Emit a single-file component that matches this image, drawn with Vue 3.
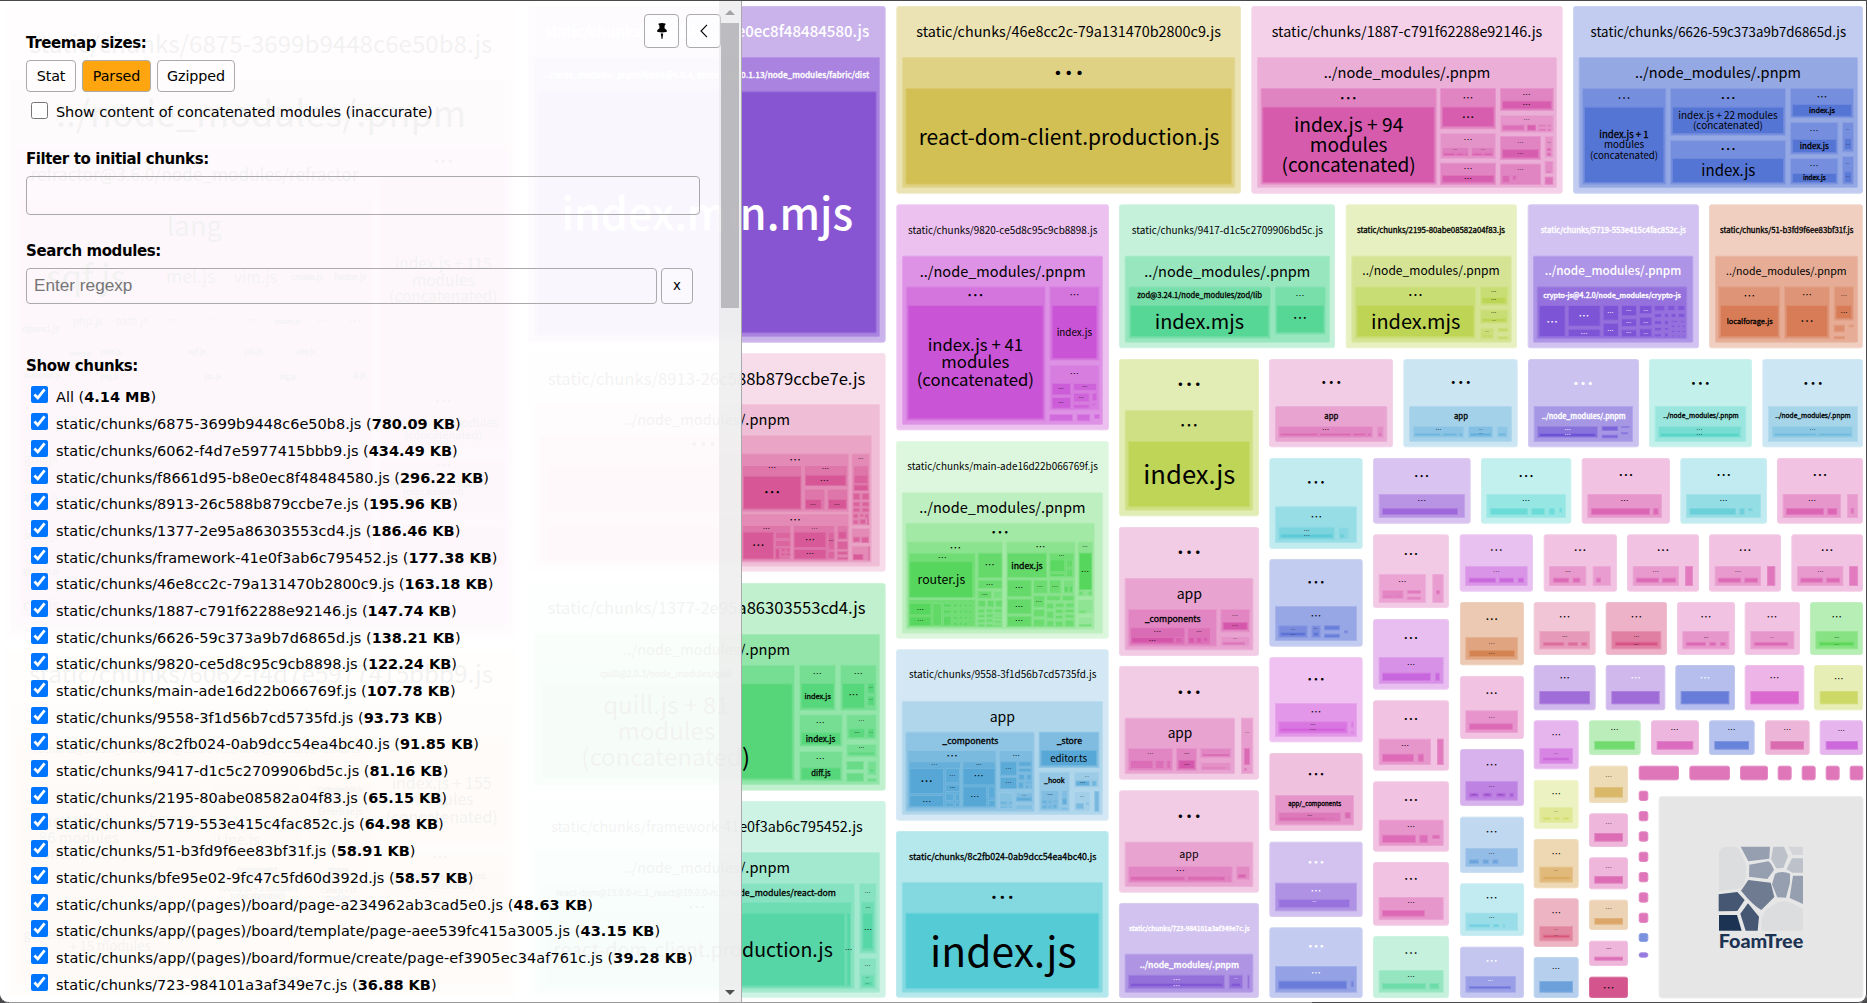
<script setup>
import { ref } from 'vue'

const families = '"Noto Sans CJK JP", "Noto Sans CJK SC", "Noto Sans", sans-serif'
const ctx = document.createElement('canvas').getContext('2d')
ctx.font = `100px ${families}`

function mix(hex, alpha) {
  const n = parseInt(hex.slice(1), 16)
  const ch = [n >> 16, (n >> 8) & 255, n & 255]
  return `rgb(${ch.map((v) => Math.round(255 - (255 - v) * alpha)).join(',')})`
}

// Each chunk: base colour, origin, label colour, then its groups.
//   "<strength%> x1 y1 x2 y2"  rectangle
//   ". cx cy width"            ellipsis label
//   "T cx baseline width text" text label
// Group coordinates are thirds of a pixel, relative to the origin.
const K = '#000', W = '#fff'
const chunks = [
  ['#d452a8', 0, 0, K, `28 15 18 1551 1914;49 33 240 1535 1895;72 48 440 1522 1875;88 60 600 1115 1850;88 1140 530 1515 1345;88 1140 1380 1515 1560;88 1140 1580 1515 1700;
   T 783 158 1388 static/chunks/6875-3699b9448c6e50b8.js;T 783 382 1230 ../node_modules/.pnpm;T 583 542 985 refractor@3.6.0/node_modules/refractor;T 583 707 165 lang;T 258 868 240 sqf.js;T 572 850 148 mel.js;T 766 850 128 vim.js;T 921 840 95 cmake.js;T 1050 840 95 factor.js;T 122 996 110 opencl.js;T 263 975 90 php.js;T 395 975 95 bash.js;T 863 972 76 cobol.js;T 1330 808 290 index.js + 115;T 1330 857 188 modules;T 1330 906 324 (concatenated);. 1330 482 46;. 520 963 32;. 638 963 32;. 751 963 32;. 967 963 28;. 1065 963 28;
   T 240 1066 66 xquery.js;T 333 1062 62 purs.js;T 590 1062 52 sqf.js;T 760 1062 54 psl.js;T 918 1062 54 coq.js;T 127 1134 112 livescript.js;T 329 1136 55 pug.js;T 640 1136 50 jsx.js;T 865 1136 50 zig.js;T 1078 1134 40 d.js;T 123 1388 102 gml.js;T 123 1504 102 abap.js;T 123 1618 102 smali.js;T 123 1723 110 gherkin.js;T 123 1830 110 css.js;T 1330 1280 330 index.js + 3 modules;T 1330 1316 232 (concatenated);. 1330 1203 40;. 1330 1395 36;T 1300 1460 260 index.js + 31 modules;T 1300 1486 182 (concatenated)`],
  ['#e0975f', 0, 0, K, `28 15 1953 1551 2990;49 33 2110 1535 2975;72 48 2210 1125 2955;72 1140 2210 1522 2530;72 1140 2560 1522 2955;88 60 2350 600 2940;88 625 2350 910 2560;88 920 2350 1110 2560;88 1145 2610 1515 2690;
   T 783 2050 1392 static/chunks/6062-f4d7e5977415bbb9.js;T 790 2170 570 ../node_modules/.pnpm;T 590 2260 980 recharts@2.15.0_react-dom@19.0.0-rc.1/node_modules/recharts;T 237 2482 300 reactUtils.js +;T 237 2530 240 86 modules;T 237 2576 290 (concatenated);T 520 2472 145 types.js;T 714 2535 128 Line.js;T 1020 2446 134 ErrorBar.js;T 1020 2376 134 CartesianGrid.js;T 1325 2366 300 index.js + 155;T 1325 2416 190 modules;T 1325 2468 336 (concatenated);T 770 2618 122 component;T 1015 2616 60 shape;T 773 2674 240 Tooltip.js + 3 modules;T 773 2698 166 (concatenated);T 1015 2680 106 Curve.js + 13;T 1015 2700 76 modules;T 1340 2636 230 index.js + 7 modules;T 1325 2668 200 (concatenated);T 320 2816 500 generateCategoricalChart.js;T 330 2852 245 + 15 modules;T 850 2792 100 Label.js;T 850 2946 100 LabelList.js;. 1320 2570 36`],
  ['#8753d2', 400, 0, W, `44 384 18 1457 1028;72 401 171 1440 1011;99 411 274 1430 1000;T 921 111 973 static/chunks/f8661d95-b8e0ec8f48484580.js;T 921 234 973 ../node_modules/.pnpm/fabric@6.5.4_encoding@0.1.13/node_modules/fabric/dist;T 922 690 875 index.min.mjs`],
  ['#d65494', 700, 340, K, `20 -515 39 557 695;38 -498 192 540 680;53 -485 285 516 668;68 -475 340 448 518;68 -475 520 448 665;68 454 340 510 557;68 454 564 510 610;68 454 617 510 664;80 -460 375 120 515;80 126 375 306 512;98 129 407 304 508;80 312 375 443 440;98 315 404 439 438;80 312 446 376 511;98 315 477 365 508;80 381 446 444 511;98 384 477 440 508;80 -460 555 120 662;80 126 555 273 660;97 128 575 222 658;90 225 575 272 597;90 225 600 272 621;97 225 625 240 658;97 243 624 256 635;97 259 624 271 635;97 243 638 256 648;97 259 638 271 648;80 279 555 405 661;97 281 575 379 624;97 281 627 379 658;90 383 575 404 630;90 383 633 404 657;80 410 555 445 600;97 414 574 440 598;92 411 603 444 629;92 411 633 444 646;92 411 650 444 660;80 459 376 507 454;92 461 404 505 432;97 461 434 505 453;92 459 459 481 480;92 485 459 508 480;92 459 485 481 500;92 485 485 508 500;92 459 503 481 517;92 485 503 508 517;92 459 521 475 535;92 479 521 491 532;92 494 521 506 535;92 459 539 475 553;92 479 537 498 553;97 501 535 507 555;92 459 590 480 607;92 484 590 507 609;97 459 642 490 660;92 505 619 510 662;
   T 20 135 952 static/chunks/8913-26c588b879ccbe7e.js;T 20 256 500 ../node_modules/.pnpm;. 10 312 60;. 285 358 26;. 216 385 18;. 216 458 38;. 376 385 16;. 373 422 20;. 285 538 26;. 175 616 28;. 330 600 22;. 199 565 16;. 343 565 15;. 330 642 18;. 339 493 13;. 411 493 13;. 393 601 11;. 482 358 12`],
  ['#54d678', 700, 340, K, `36 -515 729 557 1352;63 -498 882 540 1335;80 -485 974 285 1324;99 -475 1030 278 1318;80 297 974 408 1113;98 302 1029 403 1106;80 420 974 530 1113;98 426 1029 495 1106;98 502 1029 524 1061;98 502 1067 524 1097;80 297 1123 428 1221;98 302 1177 423 1216;80 439 1123 530 1199;96 445 1165 495 1194;96 502 1165 524 1194;80 297 1233 428 1324;98 302 1282 423 1321;80 439 1212 530 1252;96 445 1235 525 1246;88 439 1263 492 1290;80 502 1263 530 1306;92 507 1285 524 1299;88 439 1298 492 1325;88 502 1315 530 1325;
   T 20 822 953 static/chunks/1377-2e95a86303553cd4.js;T 20 945 500 ../node_modules/.pnpm;T -101 1010 396 quill@2.0.3/node_modules/quill;T -101 1123 379 quill.js + 81;T -101 1200 293 modules;T -103 1278 506 (concatenated);. 352 1001 20;. 475 1001 20;T 353 1076 79 index.js;. 460 1067 22;. 361 1148 20;T 362 1205 89 index.js;. 361 1257 20;T 363 1308 58 diff.js;. 484 1143 14;. 484 1223 13;. 471 1180 12;. 512 1045 9;. 512 1081 9;. 513 1180 9`],
  ['#54d6a6', 700, 660, K, `30 -515 423 557 1013;54 -498 576 540 998;70 -485 669 465 988;84 -475 725 456 985;99 -465 758 436 979;98 439 758 453 979;70 477 669 530 882;84 482 724 524 876;98 487 758 520 868;70 477 894 530 988;84 482 943 524 983;95 487 962 520 979;
   T 21 516 935 static/chunks/framework-41e0f3ab6c795452.js;T 20 640 500 ../node_modules/.pnpm;T -12 708 840 react-dom@19.0.0-rc.1_react@19.0.0-rc.1/node_modules/react-dom;. -10 741 40;T -21 890 839 react-dom-client.production.js;. 446 868 16;. 503 697 14;. 504 811 18;. 503 917 14;. 504 741 11;. 503 954 8;. 503 972 8`],
  ['#d2bf52', 880, 0, K, `43 49 18 1083 581;71 66 171 1066 564;99 76 264 1056 554;T 566 112 914 static/chunks/46e8cc2c-79a131470b2800c9.js;. 566 218 72;T 567 435 902 react-dom-client.production.js`],
  ['#d659ac', 1367, 0, K, `28 -347 18 587 581;49 -330 171 570 564;75 -319 264 209 554;99 -314 320 203 549;74 219 264 387 388;97 225 320 382 381;65 219 399 387 477;78 225 441 306 470;95 228 458 265 468;95 268 458 290 468;95 293 458 303 468;78 312 441 382 470;95 316 458 347 468;95 350 458 378 468;74 219 488 387 555;97 225 525 382 548;74 399 264 560 333;97 405 302 554 328;64 399 345 560 398;86 405 374 473 392;96 480 374 507 392;90 515 374 537 380;90 542 374 552 380;90 515 386 537 393;90 542 386 552 393;74 399 408 522 480;97 405 447 516 475;66 533 408 559 473;95 540 444 552 453;95 540 458 552 467;74 399 491 522 555;90 405 525 429 549;90 435 525 449 541;88 468 525 474 532;70 533 483 559 521;92 540 513 550 519;84 533 530 559 554;
   T 120 112 812 static/chunks/1887-c791f62288e92146.js;T 120 234 500 ../node_modules/.pnpm;. -56 293 40;T -55 395 328 index.js + 94;T -55 455 233 modules;T -55 515 403 (concatenated);. 303 293 24;. 303 352 28;. 303 420 20;. 303 507 20;. 303 537 18;. 479 284 18;. 479 315 18;. 479 358 14;. 460 429 14;. 460 461 14;. 460 509 14;. 264 449 10;. 348 449 10;. 546 429 8`],
  ['#5272d4', 1367, 0, K, `36 618 18 1488 581;62 635 171 1473 564;80 645 264 898 554;98 651 320 892 549;80 909 264 1257 408;98 915 320 1251 402;80 909 420 1257 554;98 915 474 1251 549;80 1269 264 1461 355;98 1275 312 1455 350;80 1269 366 1414 464;98 1275 417 1409 459;80 1269 474 1414 554;98 1275 519 1409 549;80 1425 366 1461 457;95 1431 414 1455 450;80 1425 468 1461 554;95 1431 514 1455 549;
   T 1054 112 767 static/chunks/6626-59c373a9b7d6865d.js;T 1053 234 498 ../node_modules/.pnpm;. 771 293 30;T 771 414 148 index.js + 1;T 771 444 120 modules;T 771 476 204 (concatenated);. 1083 293 35;T 1083 357 298 index.js + 22 modules;T 1083 387 210 (concatenated);. 1083 446 36;T 1084 528 162 index.js;. 1365 290 24;T 1365 339 78 index.js;. 1341 393 20;T 1342 446 87 index.js;. 1341 497 20;T 1342 540 68 index.js;. 1442 390 8;. 1442 433 10;. 1442 491 8;. 1442 530 10`],
  ['#c952d6', 880, 0, K, `36 49 613 687 1291;63 66 767 669 1275;80 77 859 497 1264;99 83 915 491 1258;80 508 859 659 1083;99 515 915 652 1077;75 508 1094 659 1232;94 515 1149 573 1186;94 515 1191 573 1226;90 579 1149 651 1173;90 579 1178 629 1207;90 579 1212 629 1226;90 635 1178 652 1203;90 635 1210 647 1218;86 508 1242 579 1264;86 590 1242 631 1264;86 642 1242 660 1257;
   T 368 702 568 static/chunks/9820-ce5d8c95c9cb8898.js;T 368 832 498 ../node_modules/.pnpm;. 286 887 38;T 286 1053 286 index.js + 41;T 286 1105 204 modules;T 286 1157 352 (concatenated);. 583 887 22;T 583 1007 106 index.js;. 583 1122 20;. 543 1168 12;. 543 1209 12;. 614 1161 12;. 604 1192 11`],
  ['#54d694', 880, 0, K, `34 717 613 1365 1045;61 734 767 1350 1028;79 745 859 1173 1017;98 750 915 1167 1011;79 1184 859 1338 1005;98 1189 915 1333 999;T 1042 702 573 static/chunks/9417-d1c5c2709906bd5c.js;T 1042 832 498 ../node_modules/.pnpm;T 959 895 374 zod@3.24.1/node_modules/zod/lib;T 958 987 268 index.mjs;. 1260 887 20;. 1260 957 32`],
  ['#bcd452', 1367, 0, K, `36 -64 613 450 1045;62 -47 767 434 1028;80 -37 859 327 1017;99 -31 915 321 1011;80 339 859 424 917;98 344 891 418 912;80 339 928 424 971;98 344 954 418 967;78 339 983 381 1018;95 344 1004 376 1012;86 392 983 424 996;86 392 1008 424 1018;T 192 698 444 static/chunks/2195-80abe08582a04f83.js;T 192 824 412 ../node_modules/.pnpm;. 145 887 34;T 146 987 268 index.mjs;. 380 876 12;. 380 901 12;. 380 940 12;. 380 960 10;. 360 994 8`],
  ['#7d52d6', 1367, 0, W, `35 482 613 996 1045;62 498 767 979 1028;82 509 859 961 1017;99 515 915 596 1011;99 602 915 701 980;99 602 986 701 1011;99 707 915 756 962;99 707 968 756 1011;99 762 915 810 949;99 762 955 810 981;99 762 988 810 1012;99 816 915 856 943;99 816 950 856 979;99 816 985 856 1012;97 861 915 895 934;97 901 915 925 933;97 931 915 955 933;97 861 939 885 954;97 891 939 906 954;97 911 939 928 954;97 933 939 955 954;97 861 960 885 975;97 891 960 906 975;97 912 960 934 968;97 939 960 954 968;97 861 981 885 994;97 891 981 906 992;97 912 974 925 984;97 930 974 940 984;97 945 974 955 984;97 861 1000 885 1012;97 891 998 906 1012;97 912 990 925 999;97 930 990 940 999;97 945 990 955 999;97 912 1004 925 1012;97 930 1004 940 1012;97 945 1004 955 1012;
   T 739 698 436 static/chunks/5719-553e415c4fac852c.js;T 738 826 410 ../node_modules/.pnpm;T 735 894 413 crypto-js@4.2.0/node_modules/crypto-js;. 555 964 26;. 651 948 24;. 651 999 16;. 730 938 14;. 730 991 14;. 785 932 12;. 785 968 12;. 785 1000 12;. 836 930 11;. 836 965 11;. 836 999 10`],
  ['#d67954', 1367, 0, K, `36 1026 613 1488 1045;62 1044 767 1473 1028;80 1053 859 1240 1017;98 1059 915 1235 1011;80 1251 859 1389 1017;98 1257 915 1383 1011;80 1400 859 1461 962;98 1406 915 1455 957;84 1400 974 1434 997;84 1400 1008 1434 1018;84 1445 974 1461 982;T 1259 698 400 static/chunks/51-b3fd9f6ee83bf31f.js;T 1258 825 362 ../node_modules/.pnpm;. 1147 887 26;T 1148 972 138 localforage.js;. 1320 887 22;. 1320 963 31;. 1431 887 14;. 1431 936 16`],
  ['#54d65a', 700, 340, K, `20 588 303 1226 896;38 605 457 1209 881;54 616 548 1185 869;68 621 604 909 864;84 626 638 827 773;99 628 664 819 773;84 626 777 827 860;98 628 789 694 826;98 628 829 694 858;92 697 789 726 858;94 729 789 755 804;94 758 789 773 804;94 776 789 788 804;94 791 789 803 804;94 806 789 817 804;94 729 808 755 822;94 758 808 773 822;94 776 808 788 822;94 791 808 803 822;94 806 808 817 822;94 729 827 755 858;94 758 827 773 840;94 776 827 788 840;94 791 827 803 840;94 806 827 817 840;94 758 844 773 858;94 776 844 788 858;94 791 844 803 858;90 833 638 907 715;88 833 719 907 747;88 833 752 875 776;78 879 752 907 776;88 833 780 858 802;88 861 780 883 802;88 886 780 907 802;88 833 806 855 820;88 858 806 880 818;88 883 806 906 818;88 833 823 855 834;88 858 821 880 833;88 883 821 906 826;88 833 837 855 848;88 858 836 880 847;88 883 830 906 837;88 833 851 855 861;88 858 851 880 861;88 883 841 906 850;88 883 854 906 861;
   68 917 604 1127 864;90 921 638 1041 714;84 1047 638 1123 714;96 1049 658 1095 696;90 1098 658 1119 683;90 1098 686 1119 711;92 1049 699 1095 711;90 921 719 995 771;90 921 776 995 823;90 921 827 995 860;86 999 719 1043 761;86 1047 719 1084 761;78 1089 719 1122 761;94 1092 738 1105 758;94 1108 738 1119 758;86 999 766 1035 803;86 999 807 1035 832;86 999 836 1035 860;86 1039 766 1082 783;86 1086 766 1123 783;86 1039 788 1062 808;86 1065 788 1093 803;86 1097 788 1123 803;86 1039 812 1062 836;86 1065 807 1090 821;86 1094 807 1123 819;86 1039 840 1062 860;86 1065 825 1090 838;86 1094 823 1123 835;86 1065 842 1090 860;86 1094 839 1123 860;
   68 1132 604 1180 770;99 1137 638 1176 750;88 1137 754 1149 766;88 1165 754 1176 766;66 1132 777 1180 822;84 1136 811 1158 820;60 1132 829 1180 862;84 1137 852 1175 860;
   T 908 390 572 static/chunks/main-ade16d22b066769f.js;T 907 519 499 ../node_modules/.pnpm;. 900 577 42;. 766 622 26;. 1021 622 22;. 727 652 20;. 869 677 22;T 724 733 143 router.js;T 981 687 94 index.js;. 869 734 16;. 854 764 12;. 661 808 16;. 661 843 14;. 957 745 18;. 957 800 18;. 957 844 18;. 1020 740 14;. 1065 740 14;. 1016 785 14;. 1155 695 18;. 1084 648 12;. 1155 622 12`],
  ['#54a6d6', 700, 660, K, `26 588 -32 1226 482;46 605 123 1209 465;66 616 215 1004 455;78 621 270 890 448;90 626 304 783 443;99 628 324 732 402;99 628 405 732 441;96 735 324 780 370;96 735 373 780 396;96 735 400 762 423;96 765 400 780 423;96 735 427 762 441;96 765 427 780 441;90 787 304 887 443;99 788 324 886 376;99 788 379 861 441;96 864 379 886 416;96 864 420 886 441;76 896 270 1000 388;96 900 304 951 347;96 900 351 951 387;94 955 304 995 320;94 955 324 995 337;94 955 342 975 361;94 979 342 995 361;94 955 365 971 386;94 975 365 995 372;94 975 376 987 386;94 989 376 995 386;70 896 397 940 447;88 900 424 922 434;88 926 424 937 434;88 900 438 922 445;88 926 438 937 445;76 947 397 999 426;96 949 412 995 424;70 947 431 999 448;84 949 440 995 446;75 1016 215 1198 324;98 1022 270 1191 318;62 1016 335 1110 455;74 1022 390 1078 449;90 1025 420 1042 431;90 1045 420 1055 431;90 1058 420 1074 427;90 1025 435 1042 446;90 1045 435 1055 446;90 1058 432 1070 446;74 1084 390 1104 436;92 1086 415 1101 434;84 1084 443 1104 449;58 1121 335 1198 384;92 1127 362 1169 378;84 1175 362 1190 378;54 1121 393 1173 455;78 1127 429 1152 448;78 1158 427 1167 434;80 1183 393 1198 455;
   T 908 55 562 static/chunks/9558-3f1d56b7cd5735fd.js;T 907 187 76 app;T 811 252 168 _components;T 1108 252 76 _store;T 1106 305 111 editor.ts;T 1063 369 62 _hook;. 756 287 26;. 703 314 15;. 680 363 28;. 680 424 20;. 836 314 12;. 836 349 22;. 824 409 20;. 948 287 16;. 925 325 14;. 925 368 14;. 757 346 14;. 757 383 12;. 1160 349 10;. 1148 370 12;. 1050 405 12;. 1146 410 10;. 973 406 10`],
  ['#52cad4', 700, 660, K, `43 588 513 1226 1013;71 605 666 1209 998;98 616 758 1198 987;T 908 599 562 static/chunks/8c2fb024-0ab9dcc54ea4bc40.js;. 907 713 56;T 910 921 440 index.js`],
  ['#bcd452', 1100, 340, K, `43 57 57 477 529;71 74 210 460 512;97 84 303 450 502;. 267 133 58;. 267 257 42;T 268 431 276 index.js`],
  ['#d452a8', 1100, 340, K, `30 57 561 477 948;53 74 714 460 931;70 84 807 351 920;85 90 862 256 914;98 94 891 221 910;92 225 891 249 910;82 261 862 333 914;96 265 891 284 910;96 288 891 305 910;96 309 891 324 905;70 361 807 450 877;97 368 846 443 870;62 361 888 450 920;88 368 907 435 914;. 267 637 58;T 268 776 76 app;T 218 845 168 _components;. 172 877 17;. 157 901 16;. 297 877 12;. 405 826 14;. 405 858 14;. 405 898 9`],
  ['#d452a8', 1100, 340, K, `30 507 57 879 322;53 525 198 862 306;70 535 258 819 294;88 541 279 653 288;88 659 279 753 288;88 759 279 797 288;88 803 279 813 288;66 830 258 852 294;88 836 279 844 288;. 694 128 50;T 694 236 42 app;. 677 268 16`],
  ['#54a8d8', 1100, 340, K, `30 910 57 1253 322;53 927 198 1236 306;68 938 258 1093 294;86 944 279 1022 288;86 1028 279 1071 288;86 1077 279 1087 288;72 1104 258 1179 294;94 1110 279 1173 288;66 1190 258 1225 294;86 1196 279 1217 288;. 1082 128 50;T 1083 236 42 app;. 1015 268 13;. 1142 268 10;. 1142 283 9`],
  ['#664bd2', 1467, 340, W, `34 183 57 516 322;58 200 198 498 306;78 210 258 393 294;96 216 279 387 291;86 404 258 453 273;86 404 284 453 295;84 462 258 488 264;84 462 276 483 283;. 348 128 48;T 350 237 252 ../node_modules/.pnpm;. 302 268 14;. 302 284 14`],
  ['#50d4c6', 1467, 340, K, `34 546 57 855 322;58 563 198 838 306;78 573 258 823 294;96 579 279 817 291;. 700 128 46;T 702 234 226 ../node_modules/.pnpm;. 697 268 14;. 697 284 14`],
  ['#54aed6', 1467, 340, K, `30 886 57 1188 322;52 903 198 1173 306;68 914 258 1158 294;86 921 279 1048 288;86 1055 279 1152 288;. 1038 128 48;T 1038 234 226 ../node_modules/.pnpm;. 1037 268 14`],
  ['#52c6d4', 1100, 340, K, `35 508 354 788 627;60 525 499 771 609;76 535 560 705 600;94 541 581 699 594;70 714 560 748 600;88 720 581 733 594;. 648 426 44;. 649 529 26;. 620 571 13;. 620 588 14`],
  ['#526ad4', 1100, 340, K, `35 508 657 788 920;60 525 798 771 903;78 535 856 623 894;96 541 877 617 888;78 634 856 662 894;96 640 877 656 888;86 672 856 720 871;86 672 881 720 894;84 732 871 744 880;. 648 728 42;. 648 827 24;. 579 867 10;. 579 882 10;. 647 867 8`],
  ['#d052d8', 1100, 660, K, `35 508 -9 788 247;60 525 129 771 231;80 535 184 743 221;97 541 205 736 214;76 752 184 762 204;76 752 213 762 221;. 648 59 42;. 648 157 24;. 639 195 12;. 639 210 14`],
  ['#d452a6', 1100, 660, K, `36 508 279 788 513;62 525 405 762 496;78 535 456 723 486;97 541 473 676 480;92 683 473 701 480;86 734 456 752 476;. 648 342 40;T 644 438 158 app/_components;. 629 465 11`],
  ['#8a5fd8', 1100, 660, W, `38 508 545 788 771;68 525 668 771 754;88 535 717 750 744;. 648 605 40;. 648 692 24;. 643 725 10`],
  ['#5a6fd6', 1100, 660, W, `36 508 802 788 1014;65 525 918 771 998;91 535 962 741 988;86 752 962 762 981;. 648 859 38;. 648 940 22`],
  ['#9a62d8', 1100, 340, K, `38 819 354 1112 551;68 836 462 1095 534;96 846 504 1074 525;. 965 407 36;. 965 483 20`],
  ['#56d6d2', 1467, 340, K, `36 42 354 313 551;62 58 462 297 534;88 69 504 183 525;88 193 504 234 525;86 245 504 264 525;86 276 504 286 518;. 177 407 36;. 177 483 18`],
  ['#d855ac', 1467, 340, K, `36 344 354 609 551;62 361 462 585 534;90 372 504 549 525;88 558 504 575 525;. 477 407 34;. 473 483 18`],
  ['#54c8d4', 1467, 340, K, `36 640 354 900 551;62 657 462 882 534;88 667 504 807 525;86 817 504 833 525;84 843 504 857 514;. 770 407 34;. 770 483 18`],
  ['#d855ac', 1467, 340, K, `36 930 354 1188 551;62 947 462 1122 534;90 957 504 1071 525;90 1081 504 1111 525;60 1140 462 1173 534;86 1151 504 1161 521;. 1059 407 34;. 1035 483 18`],
  ['#d855ac', 1100, 340, K, `31 819 583 1047 804;54 836 702 978 789;72 846 750 911 777;88 852 767 876 772;88 883 767 905 772;78 921 750 963 762;78 921 770 963 779;58 997 702 1031 789;84 1008 750 1020 763;. 933 642 34;. 907 727 18`],
  ['#c050d8', 1100, 340, K, `37 819 837 1047 1049;63 836 951 1031 1032;87 846 998 993 1023;86 1005 998 1020 1023;. 933 894 34;. 933 974 18`],
  ['#d855ac', 1100, 660, K, `36 819 121 1047 332;62 836 236 993 315;87 846 281 942 306;86 953 281 972 306;78 1011 236 1031 315;. 933 177 34;. 915 258 18`],
  ['#d855ac', 1100, 660, K, `36 819 364 1047 575;62 836 479 1031 558;87 846 524 948 549;86 958 524 984 549;86 996 524 1020 537;. 933 420 33;. 933 501 18`],
  ['#d855ac', 1100, 660, K, `36 819 606 1047 797;62 836 711 1031 780;88 846 750 975 770;. 933 658 32;. 933 730 17`],
  ['#54d69a', 1100, 660, K, `34 819 828 1047 1014;62 836 930 1031 998;86 846 969 978 988;86 988 969 1018 988;. 933 879 31;. 933 950 17`],
  ['#c252d8', 1100, 340, K, `36 1079 583 1299 755;62 1095 678 1283 738;88 1106 713 1188 728;88 1197 713 1242 728;88 1253 713 1272 728;. 1189 630 30;. 1189 695 15`],
  ['#d855ac', 1467, 340, K, `36 230 583 450 755;60 246 678 358 738;88 258 713 306 728;88 317 713 340 728;58 377 678 432 738;86 387 713 402 728;. 339 630 29;. 303 695 13`],
  ['#d855ac', 1467, 340, K, `36 480 583 696 755;60 497 678 636 738;88 507 713 576 728;88 585 713 627 728;78 654 678 678 738;. 588 630 29;. 566 695 14`],
  ['#d855ac', 1467, 340, K, `36 726 583 942 755;60 743 678 882 738;88 753 713 822 728;88 832 713 873 728;80 900 678 925 738;. 834 630 29;. 813 695 14`],
  ['#d855ac', 1467, 340, K, `36 973 583 1188 755;60 990 678 1129 738;88 1000 713 1068 728;88 1078 713 1119 728;78 1146 678 1173 738;. 1080 630 29;. 1060 695 14`],
  ['#d27e4a', 1467, 340, K, `42 -21 786 171 976;70 -5 891 153 960;95 6 930 144 951;. 74 837 29;. 74 911 15;. 74 940 15`],
  ['#d85a8e', 1467, 340, K, `36 200 786 386 945;62 217 873 369 928;88 228 906 292 918;88 302 906 333 918;88 342 906 360 918;. 293 830 26;. 293 891 12`],
  ['#d4487c', 1467, 340, K, `42 416 786 600 945;70 433 873 583 928;94 444 905 573 918;. 508 830 26;. 508 891 12;. 508 912 11`],
  ['#d855ac', 1467, 340, K, `36 630 786 804 945;62 646 873 787 928;88 657 906 717 918;88 727 906 747 918;88 759 906 776 918;. 717 830 25;. 717 891 11`],
  ['#d855ac', 1467, 340, K, `36 833 786 999 945;62 850 873 982 928;88 861 906 963 918;. 915 830 24;. 915 891 10`],
  ['#54d64e', 1467, 340, K, `42 1029 786 1188 945;70 1045 873 1173 928;94 1056 905 1161 918;. 1109 830 23;. 1109 891 11;. 1109 912 10`],
  ['#d855ac', 1467, 660, K, `36 -21 48 171 237;63 -5 151 153 219;88 6 190 138 210;. 74 99 28;. 74 171 15`],
  ['#a048d4', 1467, 660, K, `42 -21 267 171 438;68 -5 363 153 422;88 6 398 36 412;88 47 398 75 412;88 87 398 116 412;88 126 398 141 412;. 74 315 27;. 74 380 14;. 21 405 8;. 61 405 8;. 101 405 8`],
  ['#5494d8', 1467, 660, K, `36 -21 470 171 639;63 -5 564 153 621;86 6 598 36 612;86 47 598 66 612;86 76 598 94 612;. 74 517 27;. 74 580 14`],
  ['#54c6d8', 1467, 660, K, `36 -21 670 171 828;60 -5 758 153 812;84 6 792 69 802;84 78 792 96 802;84 108 792 114 802;. 74 714 27;. 74 774 13`],
  ['#5a62d6', 1467, 660, W, `36 -21 860 171 1014;62 -5 948 147 998;88 6 978 132 987;. 74 903 27;. 70 962 12`],
  ['#9257d2', 1467, 660, K, `43 200 15 386 151;87 217 93 369 133;. 293 54 23`],
  ['#9257d2', 1467, 660, W, `43 416 15 595 151;88 433 93 578 133;. 506 54 23`],
  ['#5268d4', 1467, 660, W, `43 625 15 804 151;87 641 93 787 133;. 714 54 23`],
  ['#d652c8', 1467, 660, K, `43 833 15 1012 151;87 850 93 996 133;. 922 54 22`],
  ['#c6d452', 1467, 660, K, `43 1041 15 1188 151;88 1058 93 1173 133;. 1115 54 21`],
  ['#5ed65c', 1467, 660, K, `43 366 181 521 285;88 382 243 504 269;. 443 211 18`],
  ['#d655b4', 1467, 660, K, `43 552 181 696 285;87 569 243 679 269;. 623 211 18`],
  ['#5270d4', 1467, 660, K, `43 726 181 863 285;87 742 243 846 269;. 794 211 18`],
  ['#d655a4', 1467, 660, K, `43 894 181 1028 285;87 910 243 1011 269;. 961 211 17`],
  ['#c452d6', 1467, 660, K, `43 1058 181 1188 285;87 1076 243 1173 269;. 1123 211 16`],
  ['#c452d6', 1467, 660, K, `43 200 181 335 328;70 217 264 318 312;96 228 293 306 301;. 268 222 21;. 267 279 10`],
  ['#cdda58', 1467, 660, K, `36 200 360 335 507;63 217 441 318 489;88 228 471 251 480;88 261 471 279 480;88 288 471 306 480;. 268 400 21;. 267 457 9`],
  ['#d49c42', 1467, 660, K, `40 200 537 335 685;70 217 620 318 668;94 228 650 308 658;. 268 579 21;. 267 635 9`],
  ['#d44c70', 1467, 660, K, `42 200 715 335 861;68 217 798 318 844;94 228 824 308 834;. 268 756 21;. 267 812 9;. 267 830 9`],
  ['#5490d4', 1467, 660, K, `43 200 891 335 1014;86 217 963 318 998;. 267 927 18`],
  ['#d4ac52', 1467, 660, K, `43 366 317 483 429;86 382 381 468 413;. 425 349 15`],
  ['#d655a8', 1467, 660, K, `43 366 460 483 561;86 382 519 468 545;. 425 490 15`],
  ['#d655a8', 1467, 660, K, `43 366 592 483 688;86 382 648 468 671;. 425 621 15`],
  ['#d69852', 1467, 660, K, `43 366 719 483 810;86 382 774 468 794;. 425 745 15`],
  ['#d655a8', 1467, 660, K, `43 366 842 483 918;86 382 890 468 902;. 425 866 12`],
  ['#d4528c', 1467, 660, K, `99 366 950 483 1014;. 425 983 26`],
  ['#d652a6', 1467, 660, K, `79 515 317 636 361;79 667 317 789 361;79 819 317 903 361;79 932 317 974 361;79 1004 317 1046 361;79 1076 317 1118 361;79 1148 317 1189 361;79 515 392 544 423;79 515 453 544 484;79 515 514 544 545;79 515 575 544 606;79 515 636 544 667;79 515 697 544 728;79 515 758 544 789`],
  ['#5270d4', 1467, 660, K, `77 515 819 544 846`],
  ['#7a58d6', 1467, 660, K, `80 515 877 544 893`],
  ['#d452a8', 1100, 660, K, `30 57 18 477 359;53 74 173 405 342;70 84 264 219 333;84 90 300 160 327;96 94 315 116 321;96 120 315 132 321;96 136 315 142 321;96 146 315 153 318;84 166 300 193 327;96 169 315 189 321;84 199 300 213 327;72 228 264 291 333;97 235 300 285 327;70 301 264 394 294;97 309 282 387 288;64 301 306 394 333;84 307 321 376 327;56 423 173 460 342;86 432 264 450 315;86 432 325 441 332;. 267 96 58;T 240 233 74 app;. 151 282 14;. 260 282 12;. 260 314 12;. 441 218 10`],
  ['#d452a8', 1100, 660, K, `30 57 391 477 698;53 74 545 460 681;70 84 618 398 669;86 90 648 256 663;97 94 656 252 660;86 262 648 376 663;96 267 656 290 660;96 294 656 305 660;96 308 656 318 660;96 322 656 336 660;96 340 656 360 660;86 384 648 390 663;68 408 618 450 660;90 414 642 438 654;. 267 467 58;T 267 594 58 app;. 241 633 20`],
  ['#7d52d2', 1100, 660, W, `35 57 729 477 1014;62 74 881 460 998;82 84 944 375 987;97 90 968 369 981;82 386 944 429 987;97 392 968 423 981;82 441 944 450 987;T 268 813 362 static/chunks/723-984101a3af349e7c.js;T 268 924 298 ../node_modules/.pnpm;. 230 958 16;. 230 975 16;. 407 958 9`],
]

const rects = []
const labels = []
for (const [base, ox, oy, ink, source] of chunks) {
  let first = true
  for (const part of source.split(';')) {
    const t = part.trim().split(' ')
    if (t[0] === 'T') {
      const text = t.slice(4).join(' ')
      const width = t[3] / 3
      const size = (width / ctx.measureText(text).width) * 100
      labels.push({ x: ox + t[1] / 3, y: oy + t[2] / 3, size, width, text, ink, small: size < 9.6 })
    } else if (t[0] === '.') {
      const size = t[3] / 3 / 0.74
      labels.push({ x: ox + t[1] / 3, y: oy + t[2] / 3 + size * 0.38, size, text: '…', ink })
    } else {
      const [a, x1, y1, x2, y2] = t.map(Number)
      rects.push({
        x: ox + x1 / 3 + 0.5, y: oy + y1 / 3 + 0.5,
        w: Math.max((x2 - x1) / 3 - 1, 0.5), h: Math.max((y2 - y1) / 3 - 1, 0.5),
        r: first || a === 79 ? 2 : x2 - x1 > 300 ? 1 : 0,
        fill: mix(base, a / 100), stroke: mix(base, (a / 100) * 0.86),
      })
      first = false
    }
  }
}

const sizes = ['Stat', 'Parsed', 'Gzipped']
const active = ref('Parsed')
const items = [
  ['All', '4.14 MB'],
  ['static/chunks/6875-3699b9448c6e50b8.js', '780.09 KB'],
  ['static/chunks/6062-f4d7e5977415bbb9.js', '434.49 KB'],
  ['static/chunks/f8661d95-b8e0ec8f48484580.js', '296.22 KB'],
  ['static/chunks/8913-26c588b879ccbe7e.js', '195.96 KB'],
  ['static/chunks/1377-2e95a86303553cd4.js', '186.46 KB'],
  ['static/chunks/framework-41e0f3ab6c795452.js', '177.38 KB'],
  ['static/chunks/46e8cc2c-79a131470b2800c9.js', '163.18 KB'],
  ['static/chunks/1887-c791f62288e92146.js', '147.74 KB'],
  ['static/chunks/6626-59c373a9b7d6865d.js', '138.21 KB'],
  ['static/chunks/9820-ce5d8c95c9cb8898.js', '122.24 KB'],
  ['static/chunks/main-ade16d22b066769f.js', '107.78 KB'],
  ['static/chunks/9558-3f1d56b7cd5735fd.js', '93.73 KB'],
  ['static/chunks/8c2fb024-0ab9dcc54ea4bc40.js', '91.85 KB'],
  ['static/chunks/9417-d1c5c2709906bd5c.js', '81.16 KB'],
  ['static/chunks/2195-80abe08582a04f83.js', '65.15 KB'],
  ['static/chunks/5719-553e415c4fac852c.js', '64.98 KB'],
  ['static/chunks/51-b3fd9f6ee83bf31f.js', '58.91 KB'],
  ['static/chunks/bfe95e02-9fc47c5fd60d392d.js', '58.57 KB'],
  ['static/chunks/app/(pages)/board/page-a234962ab3cad5e0.js', '48.63 KB'],
  ['static/chunks/app/(pages)/board/template/page-aee539fc415a3005.js', '43.15 KB'],
  ['static/chunks/app/(pages)/board/formue/create/page-ef3905ec34af761c.js', '39.28 KB'],
  ['static/chunks/723-984101a3af349e7c.js', '36.88 KB'],
]
</script>

<template>
  <main class="window">
    <svg class="treemap" width="1867" height="1003" viewBox="0 0 1867 1003">
      <rect v-for="(r, i) in rects" :key="i" :x="r.x" :y="r.y" :width="r.w" :height="r.h" :rx="r.r" :fill="r.fill" :stroke="r.stroke" />
      <text v-for="(l, i) in labels" :key="'t' + i" :x="l.x" :y="l.y" :font-size="l.size" :textLength="l.width" lengthAdjust="spacingAndGlyphs" :fill="l.ink" :stroke="l.small ? l.ink : 'none'" :class="{ light: l.ink === '#fff' }">{{ l.text }}</text>
      <rect x="1659" y="796.5" width="204" height="201.5" rx="3" fill="#e6e6e6" stroke="#ededed" />
      <g transform="translate(1467 660) scale(.33333)">
        <path fill="#dcdddf" d="M756 580q2-17 20-20h26q14 4 20 18l15 35q2 30-4 54-5 16-25 20l-52 6zM884 775l15-28 34-20q25-6 45 4l30 16v65H884z" />
        <path fill="#969fb0" d="M821 560h88l-2 36-63 8zM847 614l57-10q8 4 17 26l-20 27-55-7zM924 642q20-12 45-1v27l-12 45-26-1-16-39zM978 647h30v85l-40-18z" />
        <path fill="#bcc1ca" d="M919 560h32l12 28-14 36-21 1-16-28zM975 595h33v43h-32l-17-10z" />
        <path fill="#d3d5d9" d="M964 560h44v25h-31z" />
        <path fill="#6e7b90" d="M844 660l67 8q4 14 11 43l-39 39q-24-13-61-58z" />
        <path fill="#455772" d="M755 703l56-7 22 24-22 33-56 1zM843 730l33 40-4 42h-36l-16-51z" />
        <path fill="#1d3354" d="M756 765h54l14 47h-68z" />
        <text class="brand" x="882" y="863" font-size="56" textLength="254" lengthAdjust="spacingAndGlyphs">FoamTree</text>
      </g>
    </svg>

    <div class="frame"></div>
    <aside class="sidebar">
      <div class="tools">
        <button class="btn tool" aria-label="Pin">
          <svg width="10" height="16" viewBox="0 0 10 16"><path d="M1.6.6Q5-.6 8.4.6V2L7.6 2.6V5.4Q10 6.6 10 8.2 10 9.3 5 9.4 0 9.3 0 8.2 0 6.6 2.4 5.4V2.6L1.6 2zM3.8 10.6h2.4L5.4 16h-.8z" /></svg>
        </button>
        <button class="btn tool" aria-label="Hide">
          <svg width="8" height="14" viewBox="0 0 8 14"><path d="M7 .8L1 7l6 6.2" fill="none" stroke="#000" stroke-width="1.1" /></svg>
        </button>
      </div>
      <h2>Treemap sizes:</h2>
      <div class="sizes">
        <button v-for="s in sizes" :key="s" class="btn" :class="[s.toLowerCase(), { on: s === active }]" @click="active = s">{{ s }}</button>
      </div>
      <label class="item option"><input type="checkbox"><span>Show content of concatenated modules (inaccurate)</span></label>
      <h2 class="filter-title">Filter to initial chunks:</h2>
      <div class="field dropdown"></div>
      <h2 class="search-title">Search modules:</h2>
      <div class="search">
        <input class="field" type="text" placeholder="Enter regexp">
        <button class="btn clear">x</button>
      </div>
      <h2 class="chunk-title">Show chunks:</h2>
      <label v-for="[name, size] in items" :key="name" class="item" :class="{ page: name.includes('(pages)') }"><input type="checkbox" checked><span>{{ name }} (<b>{{ size }}</b>)</span></label>
      <div class="scrollbar">
        <svg width="10" height="5" viewBox="0 0 10 5"><path d="M0 5L5 0l5 5z" fill="#a3a3a3" /></svg>
        <i class="thumb"></i>
        <svg class="down" width="10" height="5" viewBox="0 0 10 5"><path d="M0 0h10L5 5z" fill="#505050" /></svg>
      </div>
    </aside>
    <div class="bottom-edge"></div>
  </main>
</template>

<style>
html, body { margin: 0; background: #fff; overflow: hidden; }
</style>

<style scoped>
.window { position: relative; width: 1867px; height: 1003px; overflow: hidden; background: #fff; }
.treemap { display: block; }
.treemap text { font-family: "Noto Sans CJK JP", "Noto Sans CJK SC", "Noto Sans", sans-serif; text-anchor: middle; stroke-width: .3px; }
.treemap text.light { font-weight: 500; }
.treemap text.brand { font-family: Lato, sans-serif; font-weight: 900; fill: #1d3354; }
.sidebar {
  position: absolute; top: 1px; left: 0; width: 741px; height: 1001px; box-sizing: border-box;
  padding: 32px 0 0 26px; overflow: hidden; background: rgba(255, 255, 255, .95);
  box-shadow: 1px 0 0 #aaa; border-radius: 0 0 0 9px;
  font: 15px/20px "DejaVu Sans", Verdana, sans-serif; color: #000;
}
.sidebar h2 { margin: 0; font: bold 15px/20px "DejaVu Sans", Verdana, sans-serif; height: 20px; letter-spacing: -.4px; }
.btn { box-sizing: border-box; padding: 0; border: 1px solid #aaa; border-radius: 4px; background: rgba(255, 255, 255, .3); font: 14.3px/20px "DejaVu Sans", Verdana, sans-serif; color: #000; }
.btn.on { background: #ffa50f; }
.tools { position: absolute; top: 13px; right: 20px; display: flex; gap: 7px; }
.tool { display: flex; align-items: center; justify-content: center; width: 35px; height: 34px; }
.sizes { display: flex; gap: 6px; margin-top: 7px; }
.sizes .btn { height: 32px; letter-spacing: -.1px; }
.stat { width: 50px; }
.parsed { width: 69px; }
.gzipped { width: 78px; }
.item { display: flex; align-items: flex-start; height: 26.7px; white-space: nowrap; font-size: 14.5px; }
.item input { width: 17px; height: 17px; margin: 2px 8px 0 5px; flex: none; }
.item span { margin-top: 3px; }
.item.option { margin-top: 8px; letter-spacing: -.09px; }
.item.option span { margin-top: 2px; }
.item.page { letter-spacing: .08px; }
.filter-title { padding-top: 22.3px; }
.field { box-sizing: border-box; border: 1px solid #aaa; border-radius: 4px; background: transparent; }
.dropdown { width: 674px; height: 39px; margin-top: 7px; }
.search-title { padding-top: 26px; }
.search { display: flex; gap: 4px; margin-top: 7px; }
.search .field { width: 631px; height: 36px; padding: 0 7px; font: 17.2px "Liberation Sans", Arial, sans-serif; }
.clear { width: 32px; height: 36px; font-size: 13.3px; }
.chunk-title { padding-top: 52px; margin-bottom: 8.5px !important; }
.scrollbar { position: absolute; top: 0; right: 0; bottom: 0; width: 22px; display: flex; flex-direction: column; align-items: center; background: rgba(225, 225, 225, .5); padding-top: 9px; box-sizing: border-box; }
.thumb { width: 18px; height: 285px; margin-top: 8px; background: rgba(160, 160, 164, .65); }
.down { margin-top: auto; margin-bottom: 7px; }
.frame { position: absolute; inset: 0; box-sizing: border-box; border: solid #48484a; border-width: 1px 1px 1px 0; border-radius: 0 0 9px 9px; box-shadow: 0 0 0 10px #48484a; pointer-events: none; }
.bottom-edge { position: absolute; left: 9px; bottom: 0; width: 1303px; height: 1px; background: #999; }
</style>
